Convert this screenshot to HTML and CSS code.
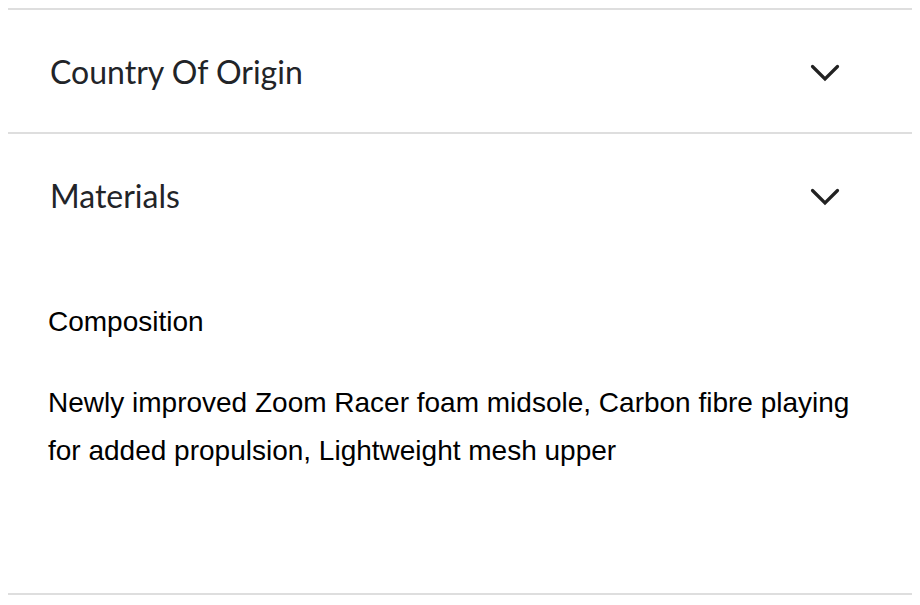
FILE: index.html
```html
<!DOCTYPE html>
<html lang="en">
<head>
<meta charset="utf-8">
<title>Product details</title>
<link rel="stylesheet" href="styles.css">
</head>
<body>
  <div class="accordion">
    <section class="item">
      <div class="item-header">
        <h3 class="item-title">Country Of Origin</h3>
        <svg class="chevron" viewBox="0 0 30 18" width="30" height="18" aria-hidden="true">
          <polyline points="2.5,2.5 15,15 27.5,2.5" fill="none" stroke="#222" stroke-width="3.2" stroke-linecap="round" stroke-linejoin="miter"/>
        </svg>
      </div>
    </section>
    <section class="item">
      <div class="item-header">
        <h3 class="item-title">Materials</h3>
        <svg class="chevron" viewBox="0 0 30 18" width="30" height="18" aria-hidden="true">
          <polyline points="2.5,2.5 15,15 27.5,2.5" fill="none" stroke="#222" stroke-width="3.2" stroke-linecap="round" stroke-linejoin="miter"/>
        </svg>
      </div>
      <div class="item-body">
        <p class="label">Composition</p>
        <p class="desc">Newly improved Zoom Racer foam midsole, Carbon fibre playing for added propulsion, Lightweight mesh upper</p>
      </div>
    </section>
  </div>
</body>
</html>
```

FILE: styles.css
```css
html, body {
  background: #ffffff;
}
body {
  margin: 8px;
}
.accordion {
  width: 904px;
  border-bottom: 2px solid #dedede;
}
.item {
  border-top: 2px solid #dedede;
}
.item-header {
  height: 122px;
  display: flex;
  align-items: center;
  justify-content: space-between;
  padding: 0 72px 0 42px;
  box-sizing: border-box;
}
.item-title {
  margin: 0;
  font-family: Lato, "Noto Sans", sans-serif;
  font-weight: 400;
  font-size: 32px;
  color: #222428;
}
.chevron {
  display: block;
  margin-top: 4px;
}
.item-body {
  padding: 42px 40px 118px 40px;
  font-family: "Liberation Sans", Arial, sans-serif;
  font-size: 28px;
  line-height: 48px;
  color: #000;
}
.item-body p {
  margin: 0;
}
.label {
  margin-bottom: 33px !important;
}
.desc {
  max-width: 812px;
}
```
